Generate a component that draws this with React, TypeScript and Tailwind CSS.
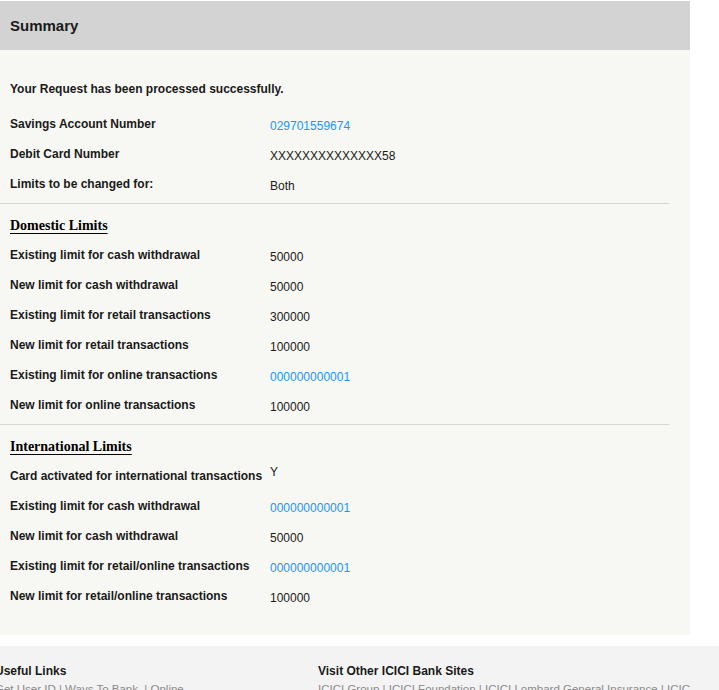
const rows1 = [
  { label: "Savings Account Number", value: "029701559674", link: true },
  { label: "Debit Card Number", value: "XXXXXXXXXXXXXX58" },
  { label: "Limits to be changed for:", value: "Both" },
];

const domestic = [
  { label: "Existing limit for cash withdrawal", value: "50000" },
  { label: "New limit for cash withdrawal", value: "50000" },
  { label: "Existing limit for retail transactions", value: "300000" },
  { label: "New limit for retail transactions", value: "100000" },
  { label: "Existing limit for online transactions", value: "000000000001", link: true },
  { label: "New limit for online transactions", value: "100000" },
];

const international = [
  { label: "Existing limit for cash withdrawal", value: "000000000001", link: true },
  { label: "New limit for cash withdrawal", value: "50000" },
  { label: "Existing limit for retail/online transactions", value: "000000000001", link: true },
  { label: "New limit for retail/online transactions", value: "100000" },
];

const Row = (props: { label: string; value: string; link?: boolean; top?: boolean }) => {
  return (
    <div className="flex h-[30px] text-[12px] leading-[14px]">
      <div className="w-[270px] shrink-0 pl-[10px] pt-[8px] font-bold text-[#1a1a1a]">{props.label}</div>
      <div
        className={`${props.top ? "pt-[4px]" : "pt-[10px]"} ${
          props.link ? "text-[#2196f3]" : "text-[#1a1a1a]"
        }`}
      >
        {props.value}
      </div>
    </div>
  );
};

const Heading = (props: { title: string; pad: string }) => {
  return (
    <div
      className={`pl-[10px] ${props.pad} font-['Liberation_Serif',serif] text-[14px] leading-[16px] font-bold text-black`}
    >
      <span className="underline decoration-1 underline-offset-[3px]">{props.title}</span>
    </div>
  );
};

export default function App() {
  return (
    <div className="min-h-[690px] bg-white pt-[1px] font-['Liberation_Sans',Arial,sans-serif]">
      <div className="w-[690px]">
        <div className="h-[49px] bg-[#d3d3d3] pl-[10px] pt-[16px]">
          <h2 className="text-[15px] leading-[17px] font-bold text-[#1a1a1a]">Summary</h2>
        </div>
        <div className="bg-[#f7f7f3] pb-[24px]">
          <p className="pl-[10px] pt-[32px] pb-[13px] text-[12px] leading-[14px] font-bold text-[#1a1a1a]">
            Your Request has been processed successfully.
          </p>
          {rows1.map((r) => (
            <Row key={r.label} {...r} />
          ))}
          <div className="mt-[4px] h-px w-[669px] bg-[#d9d5d1]" />
          <Heading title="Domestic Limits" pad="pt-[14px] pb-[6px]" />
          {domestic.map((r) => (
            <Row key={r.label} {...r} />
          ))}
          <div className="mt-[4px] h-px w-[669px] bg-[#d9d5d1]" />
          <Heading title="International Limits" pad="pt-[14px] pb-[6px]" />
          <Row label="Card activated for international transactions" value="Y" top />
          {international.map((r) => (
            <Row key={r.label + r.value} {...r} />
          ))}
        </div>
      </div>
      <div className="mt-[11px] bg-[#f3f3f3] pt-[18px] pb-[20px] flex">
        <div className="w-[323px] -ml-[5px] shrink-0">
          <h4 className="text-[12px] leading-[14px] font-bold text-[#1a1a1a]">Useful Links</h4>
          <p className="mt-[5px] text-[11.5px] leading-[13px] text-[#8a8a8a]">
            Get User ID&nbsp;|&nbsp;Ways To Bank &nbsp;|&nbsp;Online
          </p>
        </div>
        <div className="w-[372px] overflow-hidden">
          <h4 className="text-[12px] leading-[14px] font-bold text-[#1a1a1a]">Visit Other ICICI Bank Sites</h4>
          <p className="mt-[5px] text-[11.5px] leading-[13px] text-[#8a8a8a] whitespace-nowrap">
            ICICI Group | ICICI Foundation | ICICI Lombard General Insurance | ICICI Prudential
          </p>
        </div>
      </div>
    </div>
  );
}
